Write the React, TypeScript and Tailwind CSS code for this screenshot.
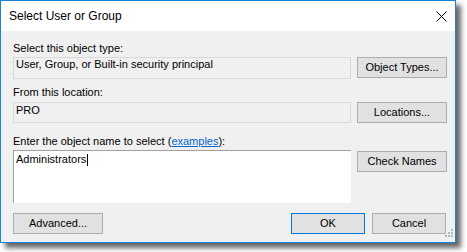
import React from "react";

const font = { fontFamily: '"Liberation Sans", Arial, sans-serif' };

function Btn({ label, w, def }: { label: string; w: string; def?: boolean }) {
  return (
    <div
      className={`${w} h-[21px] flex items-center justify-center bg-[#e1e1e1] border text-[11px] text-black ${
        def ? "border-[#0078d7]" : "border-[#adadad]"
      }`}
    >
      {label}
    </div>
  );
}

export default function App() {
  return (
    <div className="w-[467px] h-[252px] bg-white" style={font}>
      <div className="relative w-[456px] h-[243px] flex flex-col border border-[#1883d7] bg-[#f0f0f0] shadow-[5px_5px_5px_rgba(0,0,0,0.6)]">
        {/* Title bar */}
        <div className="h-[30px] bg-white flex items-center justify-between pl-[8px] pr-[7px]">
          <span className="text-[12px] text-black leading-none">Select User or Group</span>
          <svg width="11" height="11" viewBox="0 0 11 11" className="mr-[1px]">
            <path d="M0.5 0.5 L10.5 10.5 M10.5 0.5 L0.5 10.5" stroke="#000" strokeWidth="1" />
          </svg>
        </div>
        {/* Body */}
        <div className="flex-1 flex flex-col pl-[12px] pr-[8px] text-[11px] text-black">
          <div className="mt-[10px] h-[15px] leading-[15px]">Select this object type:</div>
          <div className="mt-[1px] flex gap-[6px] items-start">
            <div className="w-[338px] h-[22px] bg-[#f0f0f0] border border-[#d9d9d9] pl-[2px] leading-[13px]">
              User, Group, or Built-in security principal
            </div>
            <Btn label="Object Types..." w="w-[90px]" />
          </div>
          <div className="mt-[6px] h-[15px] leading-[15px]">From this location:</div>
          <div className="mt-[2px] flex gap-[6px] items-start">
            <div className="w-[338px] h-[21px] bg-[#f0f0f0] border border-[#d9d9d9] pl-[2px] pt-[1px] leading-[13px]">
              PRO
            </div>
            <Btn label="Locations..." w="w-[90px]" />
          </div>
          <div className="mt-[11px] h-[15px] leading-[15px]">
            Enter the object name to select (
            <span className="text-[#0066cc] underline">examples</span>):
          </div>
          <div className="mt-[1px] flex gap-[6px] items-start">
            <div className="w-[338px] h-[53px] bg-white border-t border-l border-[#a0a0a0] pl-[2px] pt-[1px] leading-[14px]">
              Administrators<span className="inline-block w-px h-[12px] bg-black align-middle ml-px" />
            </div>
            <div className="mt-[1px]">
              <Btn label="Check Names" w="w-[90px]" />
            </div>
          </div>
          <div className="mt-[10px] flex items-start">
            <Btn label="Advanced..." w="w-[90px]" />
            <div className="flex-1" />
            <Btn label="OK" w="w-[74px]" def />
            <div className="w-[7px]" />
            <Btn label="Cancel" w="w-[74px]" />
            <div className="w-[1px]" />
          </div>
        </div>
        {/* resize grip */}
        <svg width="10" height="10" viewBox="0 0 10 10" className="absolute right-[2px] bottom-[3px]">
          <rect x="8" y="0" width="2" height="2" fill="#b8b8b8" />
          <rect x="5" y="3" width="2" height="2" fill="#b8b8b8" />
          <rect x="8" y="3" width="2" height="2" fill="#b8b8b8" />
          <rect x="2" y="6" width="2" height="2" fill="#b8b8b8" />
          <rect x="5" y="6" width="2" height="2" fill="#b8b8b8" />
          <rect x="8" y="6" width="2" height="2" fill="#b8b8b8" />
        </svg>
      </div>
    </div>
  );
}
